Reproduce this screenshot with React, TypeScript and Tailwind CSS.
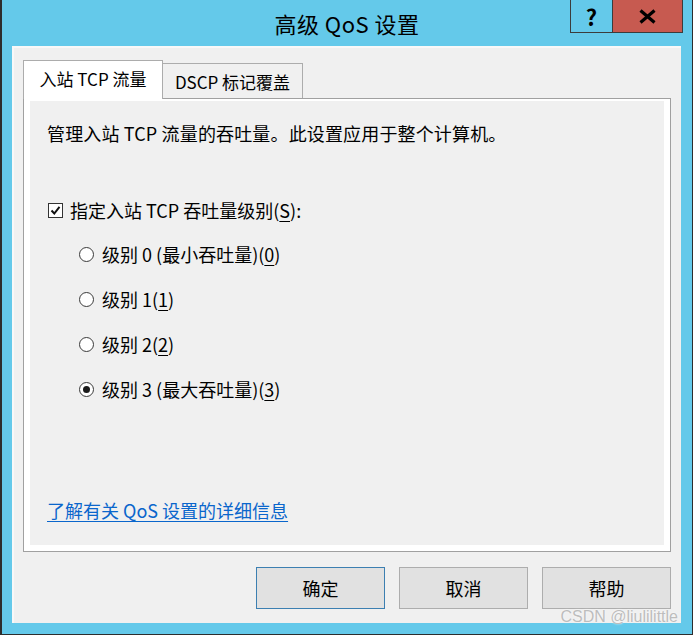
import React from 'react'

const font = { fontFamily: '"Noto Sans CJK SC", "Noto Sans", sans-serif' }

function Mn({ children }: { children: React.ReactNode }) {
    return <span className="underline underline-offset-[3px] decoration-1">{children}</span>
}

function Radio({ checked, children }: { checked?: boolean; children: React.ReactNode }) {
    return (
        <div className="flex h-6 items-center">
            <span className="flex h-[15px] w-[15px] items-center justify-center rounded-full border border-[#3a3a3a] bg-white">
                {checked && <span className="h-[7px] w-[7px] rounded-full bg-[#1a1a1a]" />}
            </span>
            <span className="ml-[8px]">{children}</span>
        </div>
    )
}

export default function App() {
    return (
        <div
            className="relative flex h-[635px] w-[693px] flex-col border-b border-l-2 border-r border-[#2d2d2d] bg-[#64c9ea] text-[18px] leading-6 text-black"
            style={font}
        >
            {/* title bar */}
            <div className="relative flex h-[46px] items-center justify-center">
                <span className="text-[22px] tracking-[0.5px]">高级 QoS 设置</span>
                <div className="absolute right-[9px] top-0 flex h-[33px]">
                    <div className="flex w-[43px] items-center justify-center border border-t-0 border-[#3c3c3c] text-[22px] font-bold">
                        ?
                    </div>
                    <div className="flex w-[70px] items-center justify-center border border-l-0 border-t-0 border-[#3c3c3c] bg-[#c75a50]">
                        <svg width="17" height="15" viewBox="0 0 17 15">
                            <path d="M1.5 1.5 L15.5 13.5 M15.5 1.5 L1.5 13.5" stroke="#000" strokeWidth="3.2" />
                        </svg>
                    </div>
                </div>
            </div>

            {/* client area */}
            <div className="ml-[10px] mr-[11px] flex h-[577px] flex-col border-l-2 border-t-2 border-[#f8f8f8] bg-[#f0f0f0] pl-[9px] pr-[10px] pt-[12px]">
                {/* tabs */}
                <div className="relative z-10 flex h-[38px] items-end text-[17px]">
                    <div className="mb-[-1px] flex h-[39px] w-[140px] items-center justify-center border border-b-0 border-[#acacac] bg-white pb-[2px]">
                        入站 TCP 流量
                    </div>
                    <div className="flex h-[35px] w-[140px] items-center justify-center border border-b-0 border-l-0 border-[#acacac] bg-[#f0f0f0] pt-[1px]">
                        DSCP 标记覆盖
                    </div>
                </div>

                {/* panel */}
                <div className="flex h-[454px] flex-col border border-[#a0a0a0] bg-white px-[6px] pb-[6px] pt-[2px]">
                    <div className="flex flex-1 flex-col bg-[#f0f0f0] pl-[17px] pt-[20px]">
                        <div className="tracking-[0.15px]">管理入站 TCP 流量的吞吐量。此设置应用于整个计算机。</div>

                        <div className="ml-[1px] mt-[53px] flex h-6 items-center">
                            <span className="flex h-[15px] w-[15px] items-center justify-center border border-[#333] bg-white">
                                <svg width="11" height="11" viewBox="0 0 11 11">
                                    <path d="M1.5 5.5 L4.3 8.5 L9.5 1.8" fill="none" stroke="#111" strokeWidth="2" />
                                </svg>
                            </span>
                            <span className="ml-[7px]">
                                指定入站 TCP 吞吐量级别(<Mn>S</Mn>):
                            </span>
                        </div>

                        <div className="ml-[32px] mt-[20px] flex flex-col gap-[21px]">
                            <Radio>
                                级别 0 (最小吞吐量)(<Mn>0</Mn>)
                            </Radio>
                            <Radio>
                                级别 1(<Mn>1</Mn>)
                            </Radio>
                            <Radio>
                                级别 2(<Mn>2</Mn>)
                            </Radio>
                            <Radio checked>
                                级别 3 (最大吞吐量)(<Mn>3</Mn>)
                            </Radio>
                        </div>

                        <div className="mt-[97px] text-[#0a66cc] underline underline-offset-[3px] decoration-1">
                            了解有关 QoS 设置的详细信息
                        </div>
                    </div>
                </div>

                {/* buttons */}
                <div className="mt-[15px] flex justify-end gap-[14px]">
                    <button className="h-[42px] w-[129px] border border-[#3c7fb1] bg-[#e1e1e1]">确定</button>
                    <button className="h-[42px] w-[129px] border border-[#adadad] bg-[#e1e1e1]">取消</button>
                    <button className="h-[42px] w-[129px] border border-[#adadad] bg-[#e1e1e1]">帮助</button>
                </div>
            </div>

            <span
                className="absolute bottom-[9px] right-[14px] text-[16px] leading-none text-[#bdbdbd] [text-shadow:0_0_2px_#fff]"
                style={{ fontFamily: '"Liberation Sans", Arial, sans-serif' }}
            >
                CSDN @liulilittle
            </span>
        </div>
    )
}
